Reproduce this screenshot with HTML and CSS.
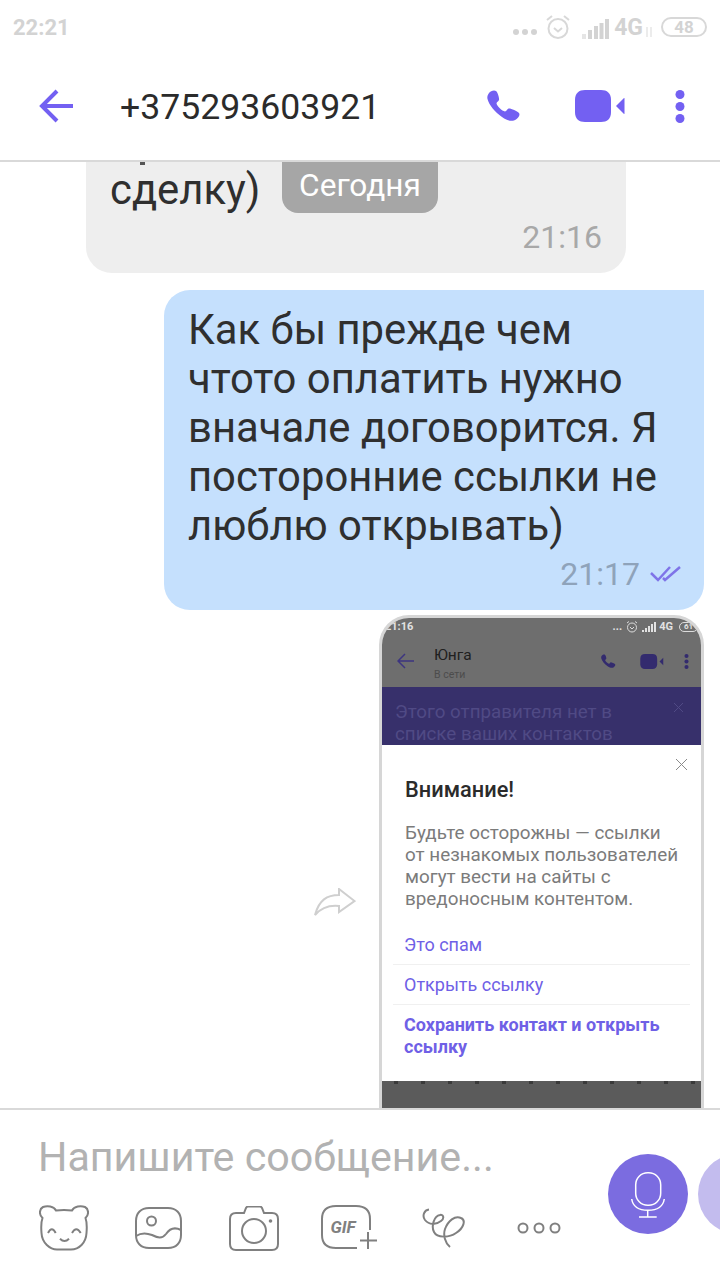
FILE: index.html
```html
<!DOCTYPE html>
<html lang="ru">
<head>
    <meta charset="UTF-8">
    <meta name="viewport" content="width=device-width, initial-scale=1.0">
    <title>+375293603921</title>
    <link rel="stylesheet" href="styles.css">
</head>
<body>
    <div class="app">
        <div class="status">
            <span class="status-time">22:21</span>
            <svg class="status-dots" width="24" height="8" viewBox="0 0 24 8"><circle cx="3" cy="4" r="3"/><circle cx="12" cy="4" r="3"/><circle cx="21" cy="4" r="3"/></svg>
            <svg class="status-alarm" width="24" height="24" viewBox="0 0 24 24"><circle cx="12" cy="13.5" r="9.5"/><path d="M8 13l4 3.5 4-3.5M1 5l5-4M23 5l-5-4"/></svg>
            <svg class="status-signal" width="27" height="20" viewBox="0 0 27 20"><rect x="0" y="15" width="4" height="5" opacity=".6"/><rect x="6" y="11" width="4" height="9"/><rect x="12" y="7" width="4" height="13"/><rect x="17.5" y="4" width="4" height="16"/><rect x="23" y="0" width="4" height="20"/></svg>
            <span class="status-net">4G</span>
            <svg class="status-arrows" width="8" height="10" viewBox="0 0 8 10"><path d="M2 0v10M6 0v10"/></svg>
            <span class="status-battery">48</span>
        </div>

        <div class="header">
            <svg class="back" width="36" height="36" viewBox="0 0 36 36"><path d="M18 3L3 18l15 15M3 18h31"/></svg>
            <div class="title">+375293603921</div>
            <svg class="call" width="34" height="33" viewBox="0 0 34 33"><path d="M2 3C3.5 1 7-.5 9 1c1.500 1 3.500 7 3 9-.5 1.500-2.500 2-2.500 3.500.5 2.500 5.500 7.500 8.500 8 1.500 0 2-2.500 3.500-3 2-.5 8.500 2.500 10.500 4.500 1.500 2-1 5-3 6.500-3 2-8 2-14-2.500C8 22 2 15 .5 9 0 7 .5 5 2 3z"/></svg>
            <svg class="video" width="50" height="32" viewBox="0 0 50 32"><path d="M10 0h16c6 0 10 3 10 10v12c0 7-4 10-10 10H10C4 32 0 29 0 22V10C0 3 4 0 10 0z"/><path d="M41 16l8-8c.5 0 .500.500.500 1v14c0 .5 0 1-.500 1z"/></svg>
            <svg class="more" width="10" height="33" viewBox="0 0 10 33"><circle cx="5" cy="4.500" r="4.500"/><circle cx="5" cy="16.500" r="4.500"/><circle cx="5" cy="28.500" r="4.500"/></svg>
        </div>

        <div class="chat">
            <div class="bubble incoming">
                <i class="clip clip-a"></i>
                <i class="clip clip-b"></i>
                <div class="date-badge">Сегодня</div>
                <div class="msg-text">сделку)</div>
                <div class="meta"><span class="time">21:16</span></div>
            </div>

            <div class="bubble outgoing">
                <div class="msg-text">Как бы прежде чем<br>чтото оплатить нужно<br>вначале договорится. Я<br>посторонние ссылки не<br>люблю открывать)</div>
                <div class="meta">
                    <span class="time">21:17</span>
                    <svg class="ticks" width="31" height="18" viewBox="0 0 31 18"><path d="M1 8l7 7L20 2M13 13l2 2L30 2"/></svg>
                </div>
            </div>

            <div class="shot-row">
                <svg class="forward" width="42" height="28" viewBox="0 0 42 28"><path d="M1 27C5 12 13 7 25 7V1l15.500 12L25 24v-6C15 17 7 20 1 27z"/></svg>
                <div class="shot">
                    <div class="shot-status">
                        <span class="shot-time">21:16</span>
                        <span class="shot-icons">...</span>
                        <svg width="12" height="12" viewBox="0 0 12 12" class="shot-alarm"><circle cx="6" cy="6.500" r="4.500"/><path d="M4 6l2 2 2-2M1 2l2-1.500M11 2L9 .5"/></svg>
                        <svg width="15" height="10" viewBox="0 0 15 10" class="shot-signal"><rect x="0" y="8" width="2" height="2"/><rect x="3" y="6" width="2" height="4"/><rect x="6" y="4" width="2" height="6"/><rect x="9" y="2" width="2" height="8"/><rect x="12" y="0" width="2" height="10"/></svg>
                        <span class="shot-net">4G</span>
                        <span class="shot-battery">61</span>
                    </div>
                    <div class="shot-header">
                        <svg class="shot-back" width="17" height="16" viewBox="0 0 17 16"><path d="M8 1L1 8l7 7M1 8h16"/></svg>
                        <div class="shot-contact">
                            <div class="shot-name">Юнга</div>
                            <div class="shot-online">В сети</div>
                        </div>
                        <svg class="shot-call" width="15" height="15" viewBox="0 0 34 33"><path d="M2 3C3.5 1 7-.5 9 1c1.500 1 3.500 7 3 9-.5 1.500-2.500 2-2.500 3.500.5 2.500 5.500 7.500 8.500 8 1.500 0 2-2.500 3.500-3 2-.5 8.500 2.500 10.500 4.500 1.500 2-1 5-3 6.500-3 2-8 2-14-2.500C8 22 2 15 .5 9 0 7 .5 5 2 3z"/></svg>
                        <svg class="shot-video" width="24" height="15" viewBox="0 0 50 32"><path d="M10 0h16c6 0 10 3 10 10v12c0 7-4 10-10 10H10C4 32 0 29 0 22V10C0 3 4 0 10 0z"/><path d="M41 16l8-8v16z"/></svg>
                        <svg class="shot-more" width="5" height="15" viewBox="0 0 10 33"><circle cx="5" cy="4.500" r="4.500"/><circle cx="5" cy="16.500" r="4.500"/><circle cx="5" cy="28.500" r="4.500"/></svg>
                    </div>
                    <div class="shot-band">
                        <div class="shot-band-text">Этого отправителя нет в<br>списке ваших контактов</div>
                        <svg class="shot-band-close" width="11" height="11" viewBox="0 0 11 11"><path d="M1 1l9 9M10 1l-9 9"/></svg>
                    </div>
                    <div class="dialog">
                        <div class="dialog-top">
                            <svg width="13" height="13" viewBox="0 0 13 13"><path d="M1 1l11 11M12 1L1 12"/></svg>
                        </div>
                        <div class="dialog-title">Внимание!</div>
                        <div class="dialog-body">Будьте осторожны — ссылки<br>от незнакомых пользователей<br>могут вести на сайты с<br>вредоносным контентом.</div>
                        <div class="dialog-link">Это спам</div>
                        <div class="dialog-link">Открыть ссылку</div>
                        <div class="dialog-link strong">Сохранить контакт и открыть<br>ссылку</div>
                    </div>
                    <div class="shot-bottom"></div>
                </div>
            </div>
        </div>

        <div class="composer">
            <div class="composer-main">
                <div class="placeholder">Напишите сообщение...</div>
                <div class="tools">
                    <div class="tool">
                        <svg width="50" height="46" viewBox="0 0 50 46"><path d="M17 5.500C15 1 8 .5 4 2 0 4 0 10 3.500 13 2 17 2 22 2.500 28c.5 10 8.500 16.500 15.500 16.500h14c8 0 15-6.500 15.500-16.500.5-6 .5-11-1-15C50 10 50 4 46 2c-4-1.500-11-1-13 3.500-5-.5-11-.5-16 0z"/><path d="M9 28q3.800-7.500 7.700 0M33 28q4.300-7.500 8.700 0M21 33.700q4.500 4.500 9 0"/></svg>
                    </div>
                    <div class="tool">
                        <svg width="47" height="42" viewBox="0 0 47 42"><path d="M14 1h19c8 0 13 5 13 13v14c0 8-5 13-13 13H14C6 41 1 36 1 28V14C1 6 6 1 14 1z"/><circle cx="16.500" cy="14" r="4.500"/><path d="M1 29c6-4 11-3 16-1 6 3 10 4 14-1 4-6 9-7 15-4"/></svg>
                    </div>
                    <div class="tool">
                        <svg width="50" height="45" viewBox="0 0 50 45"><path d="M7 7h8l2-5c.5-1 1-1.500 2-1.500h12c1 0 1.500.5 2 1.500l2 5h8c4 0 6 2 6 6v25c0 4-2 6-6 6H7c-4 0-6-2-6-6V13c0-4 2-6 6-6z"/><circle cx="25" cy="25" r="12"/><circle class="filled" cx="41.500" cy="15" r="1.800"/></svg>
                    </div>
                    <div class="tool">
                        <svg width="56" height="46" viewBox="0 0 56 46"><path d="M49 25V14C49 5 44 1 35 1H15C6 1 1 5 1 14v16c0 9 5 13 14 13h21"/><path d="M47 27v17M39 35.500h17"/><text class="gif" x="9.500" y="28">GIF</text></svg>
                    </div>
                    <div class="tool">
                        <svg width="44" height="40" viewBox="0 0 44 40"><path d="M7 1.500C2 2 0 8 3 12c4 5 11 5 16 1 4-3 2-7-1-6-6 1-9 11-6 17 3 6 15 6 22 1 8-5 10-13 5-15-6-3-13 3-16 11-2 6 0 14 5 18"/></svg>
                    </div>
                    <div class="tool">
                        <svg width="44" height="12" viewBox="0 0 44 12"><circle cx="6" cy="6" r="4.500"/><circle cx="22" cy="6" r="4.500"/><circle cx="38" cy="6" r="4.500"/></svg>
                    </div>
                </div>
            </div>
            <div class="mic">
                <svg width="40" height="50" viewBox="0 0 40 50"><rect x="7.700" y="3.700" width="25" height="32.600" rx="12"/><path d="M3.700 30c1.300 8 8.300 11.300 16.300 11.300S35 38 36.300 30M19.700 41.300V48M11 48h17.700"/></svg>
            </div>
            <div class="mic-next"></div>
        </div>
    </div>
</body>
</html>
```

FILE: styles.css
```css
* {
    box-sizing: border-box;
}
body {
    margin: 0;
    padding: 0;
    font-family: Roboto, "Liberation Sans", sans-serif;
    background: #fff;
    color: #2f2f2f;
}
.app {
    width: 720px;
    height: 1280px;
    display: flex;
    flex-direction: column;
    overflow: hidden;
}
svg {
    display: block;
    flex-shrink: 0;
}

/* status bar */
.status {
    height: 54px;
    display: flex;
    align-items: center;
    padding: 0 13px;
    color: #d3d3d3;
}
.status-time {
    font-size: 22px;
    font-weight: 700;
    margin-right: auto;
}
.status-dots {
    fill: #d3d3d3;
    margin-top: 10px;
}
.status-alarm {
    fill: none;
    stroke: #d8d8d8;
    stroke-width: 2;
    margin-left: 9px;
}
.status-signal {
    fill: #d3d3d3;
    margin-left: 12px;
    margin-top: 3px;
}
.status-net {
    font-size: 23px;
    font-weight: 700;
    margin-left: 5px;
}
.status-arrows {
    fill: none;
    stroke: #e6e6e6;
    stroke-width: 1.500;
    margin-left: 2px;
    margin-top: 10px;
}
.status-battery {
    width: 46px;
    height: 20px;
    margin-left: 8px;
    border: 2px solid #d8d8d8;
    border-radius: 10px;
    font-size: 17px;
    font-weight: 700;
    line-height: 16px;
    text-align: center;
}

/* header */
.header {
    height: 108px;
    display: flex;
    align-items: center;
    padding: 0 35px 2px 39px;
    border-bottom: 2px solid #d9d9d9;
}
.back {
    fill: none;
    stroke: #7360f2;
    stroke-width: 4;
}
.title {
    font-size: 35.600px;
    margin: 1px 0 0 45px;
    color: #2b2b2b;
}
.call {
    fill: #7360f2;
    margin-left: auto;
}
.video {
    fill: #7360f2;
    margin-left: 54px;
}
.more {
    fill: #7360f2;
    margin-left: 50px;
}

/* chat */
.chat {
    flex: 1;
    min-height: 0;
    display: flex;
    flex-direction: column;
    overflow: hidden;
}
.bubble {
    flex-shrink: 0;
    position: relative;
}
.msg-text {
    font-size: 41.800px;
    line-height: 49px;
    color: #2f2f2f;
}
.meta {
    display: flex;
    align-items: center;
    justify-content: flex-end;
}
.time {
    font-size: 32px;
}
.incoming {
    width: 540px;
    height: 111px;
    margin-left: 86px;
    padding: 3px 24px 0 24px;
    background: #eeeeee;
    border-radius: 0 0 26px 26px;
}
.incoming .meta {
    margin-top: 4px;
}
.incoming .time {
    color: #a8a8a8;
}
.clip {
    position: absolute;
    top: 0;
    width: 5px;
    height: 3px;
    background: #555;
}
.clip-a {
    left: 54px;
}
.clip-b {
    left: 211px;
}
.date-badge {
    position: absolute;
    top: 0;
    left: 196px;
    width: 156px;
    height: 51px;
    background: #a6a6a6;
    border-radius: 0 0 16px 16px;
    color: #fff;
    font-size: 31.600px;
    line-height: 47px;
    text-align: center;
}
.outgoing {
    width: 540px;
    height: 320px;
    margin: 17px 16px 0 auto;
    padding: 15px 23px 0 24px;
    background: #c5e0fd;
    border-radius: 26px 0 26px 26px;
}
.outgoing .meta {
    margin-top: 5px;
}
.outgoing .time {
    color: #8fa3ba;
}
.ticks {
    fill: none;
    stroke: #7f74e8;
    stroke-width: 2.500;
    margin-left: 10px;
}

/* forwarded screenshot */
.shot-row {
    display: flex;
    align-items: flex-start;
    justify-content: flex-end;
    margin: 5px 16px 0 0;
}
.forward {
    fill: none;
    stroke: #cfcfcf;
    stroke-width: 2;
    margin: 273px 23px 0 0;
}
.shot {
    width: 325px;
    flex-shrink: 0;
    border: 3px solid #d6d6d6;
    border-bottom: 0;
    border-radius: 30px 30px 0 0;
    overflow: hidden;
}
.shot-status {
    height: 17px;
    display: flex;
    align-items: center;
    padding: 0 3px;
    background: #6e6e6e;
    color: #e2e2e2;
    font-size: 11px;
    font-weight: 700;
}
.shot-time {
    margin-right: auto;
}
.shot-alarm {
    fill: none;
    stroke: #dcdcdc;
    margin-left: 4px;
}
.shot-signal {
    fill: #e2e2e2;
    margin-left: 4px;
}
.shot-net {
    margin-left: 2px;
}
.shot-battery {
    width: 19px;
    height: 10px;
    margin-left: 6px;
    border: 1px solid #dcdcdc;
    border-radius: 5px;
    font-size: 8px;
    line-height: 8px;
    text-align: center;
}
.shot-header {
    height: 52px;
    display: flex;
    align-items: center;
    padding: 0 12px 0 15px;
    background: #6e6e6e;
}
.shot-back {
    fill: none;
    stroke: #3d3580;
    stroke-width: 1.500;
}
.shot-contact {
    margin-left: 20px;
    margin-right: auto;
}
.shot-name {
    font-size: 15.500px;
    line-height: 20px;
    margin-top: 4px;
    color: #202020;
}
.shot-online {
    font-size: 10.500px;
    line-height: 14px;
    margin-top: 3px;
    color: #4c4c4c;
}
.shot-call {
    fill: #332b6e;
}
.shot-video {
    fill: #332b6e;
    margin-left: 24px;
}
.shot-more {
    fill: #332b6e;
    margin-left: 20px;
}
.shot-band {
    height: 58px;
    display: flex;
    justify-content: space-between;
    padding: 15px 17px 0 13px;
    background: #37306b;
    overflow: hidden;
}
.shot-band-text {
    font-size: 18.800px;
    line-height: 21.500px;
    color: #504a85;
}
.shot-band-close {
    fill: none;
    stroke: #504a85;
    margin-top: 0;
}
.dialog {
    height: 336px;
    padding: 0 11px;
    background: #fff;
}
.dialog-top {
    display: flex;
    justify-content: flex-end;
    padding-top: 13px;
    padding-right: 2px;
}
.dialog-top svg {
    fill: none;
    stroke: #8a8a8a;
}
.dialog-title {
    margin: 7px 0 0 12px;
    font-size: 21.800px;
    font-weight: 500;
    line-height: 24px;
    color: #2b2b2b;
}
.dialog-body {
    margin: 20px 0 15px 12px;
    font-size: 18.850px;
    line-height: 22px;
    color: #7b7b7b;
}
.dialog-link {
    padding: 9px 0 8px 11px;
    border-bottom: 1px solid #f0f0f0;
    font-size: 18px;
    line-height: 22px;
    color: #6f60e6;
}
.dialog-link.strong {
    border-bottom: 0;
    font-weight: 700;
}
.shot-bottom {
    height: 60px;
    background: #5b5b5b linear-gradient(90deg, #3a3a3a 0 4px, transparent 4px) 12px 0 / 27px 3px repeat-x;
}

/* composer */
.composer {
    height: 172px;
    flex-shrink: 0;
    display: flex;
    align-items: flex-start;
    padding-left: 16px;
    border-top: 2px solid #d9d9d9;
    overflow: hidden;
}
.composer-main {
    width: 592px;
    flex-shrink: 0;
}
.placeholder {
    padding: 24px 0 0 22px;
    font-size: 41.200px;
    line-height: 46px;
    color: #b2b2b2;
}
.tools {
    display: flex;
    height: 96px;
}
.tool {
    width: 95px;
    display: flex;
    align-items: center;
    justify-content: center;
}
.tool svg {
    fill: none;
    stroke: #808080;
    stroke-width: 2;
}
.tool svg .filled {
    fill: #808080;
    stroke: none;
}
.tool svg .gif {
    fill: #808080;
    stroke: none;
    font-size: 17px;
    font-weight: 700;
    font-style: italic;
}
.mic {
    width: 80px;
    height: 80px;
    flex-shrink: 0;
    margin-top: 44px;
    display: flex;
    align-items: center;
    justify-content: center;
    background: #7b6ce0;
    border-radius: 50%;
}
.mic svg {
    fill: none;
    stroke: #fff;
    stroke-width: 1.500;
}
.mic-next {
    width: 80px;
    height: 80px;
    flex-shrink: 0;
    margin: 44px 0 0 10px;
    background: #c3bcee;
    border-radius: 50%;
}
```
